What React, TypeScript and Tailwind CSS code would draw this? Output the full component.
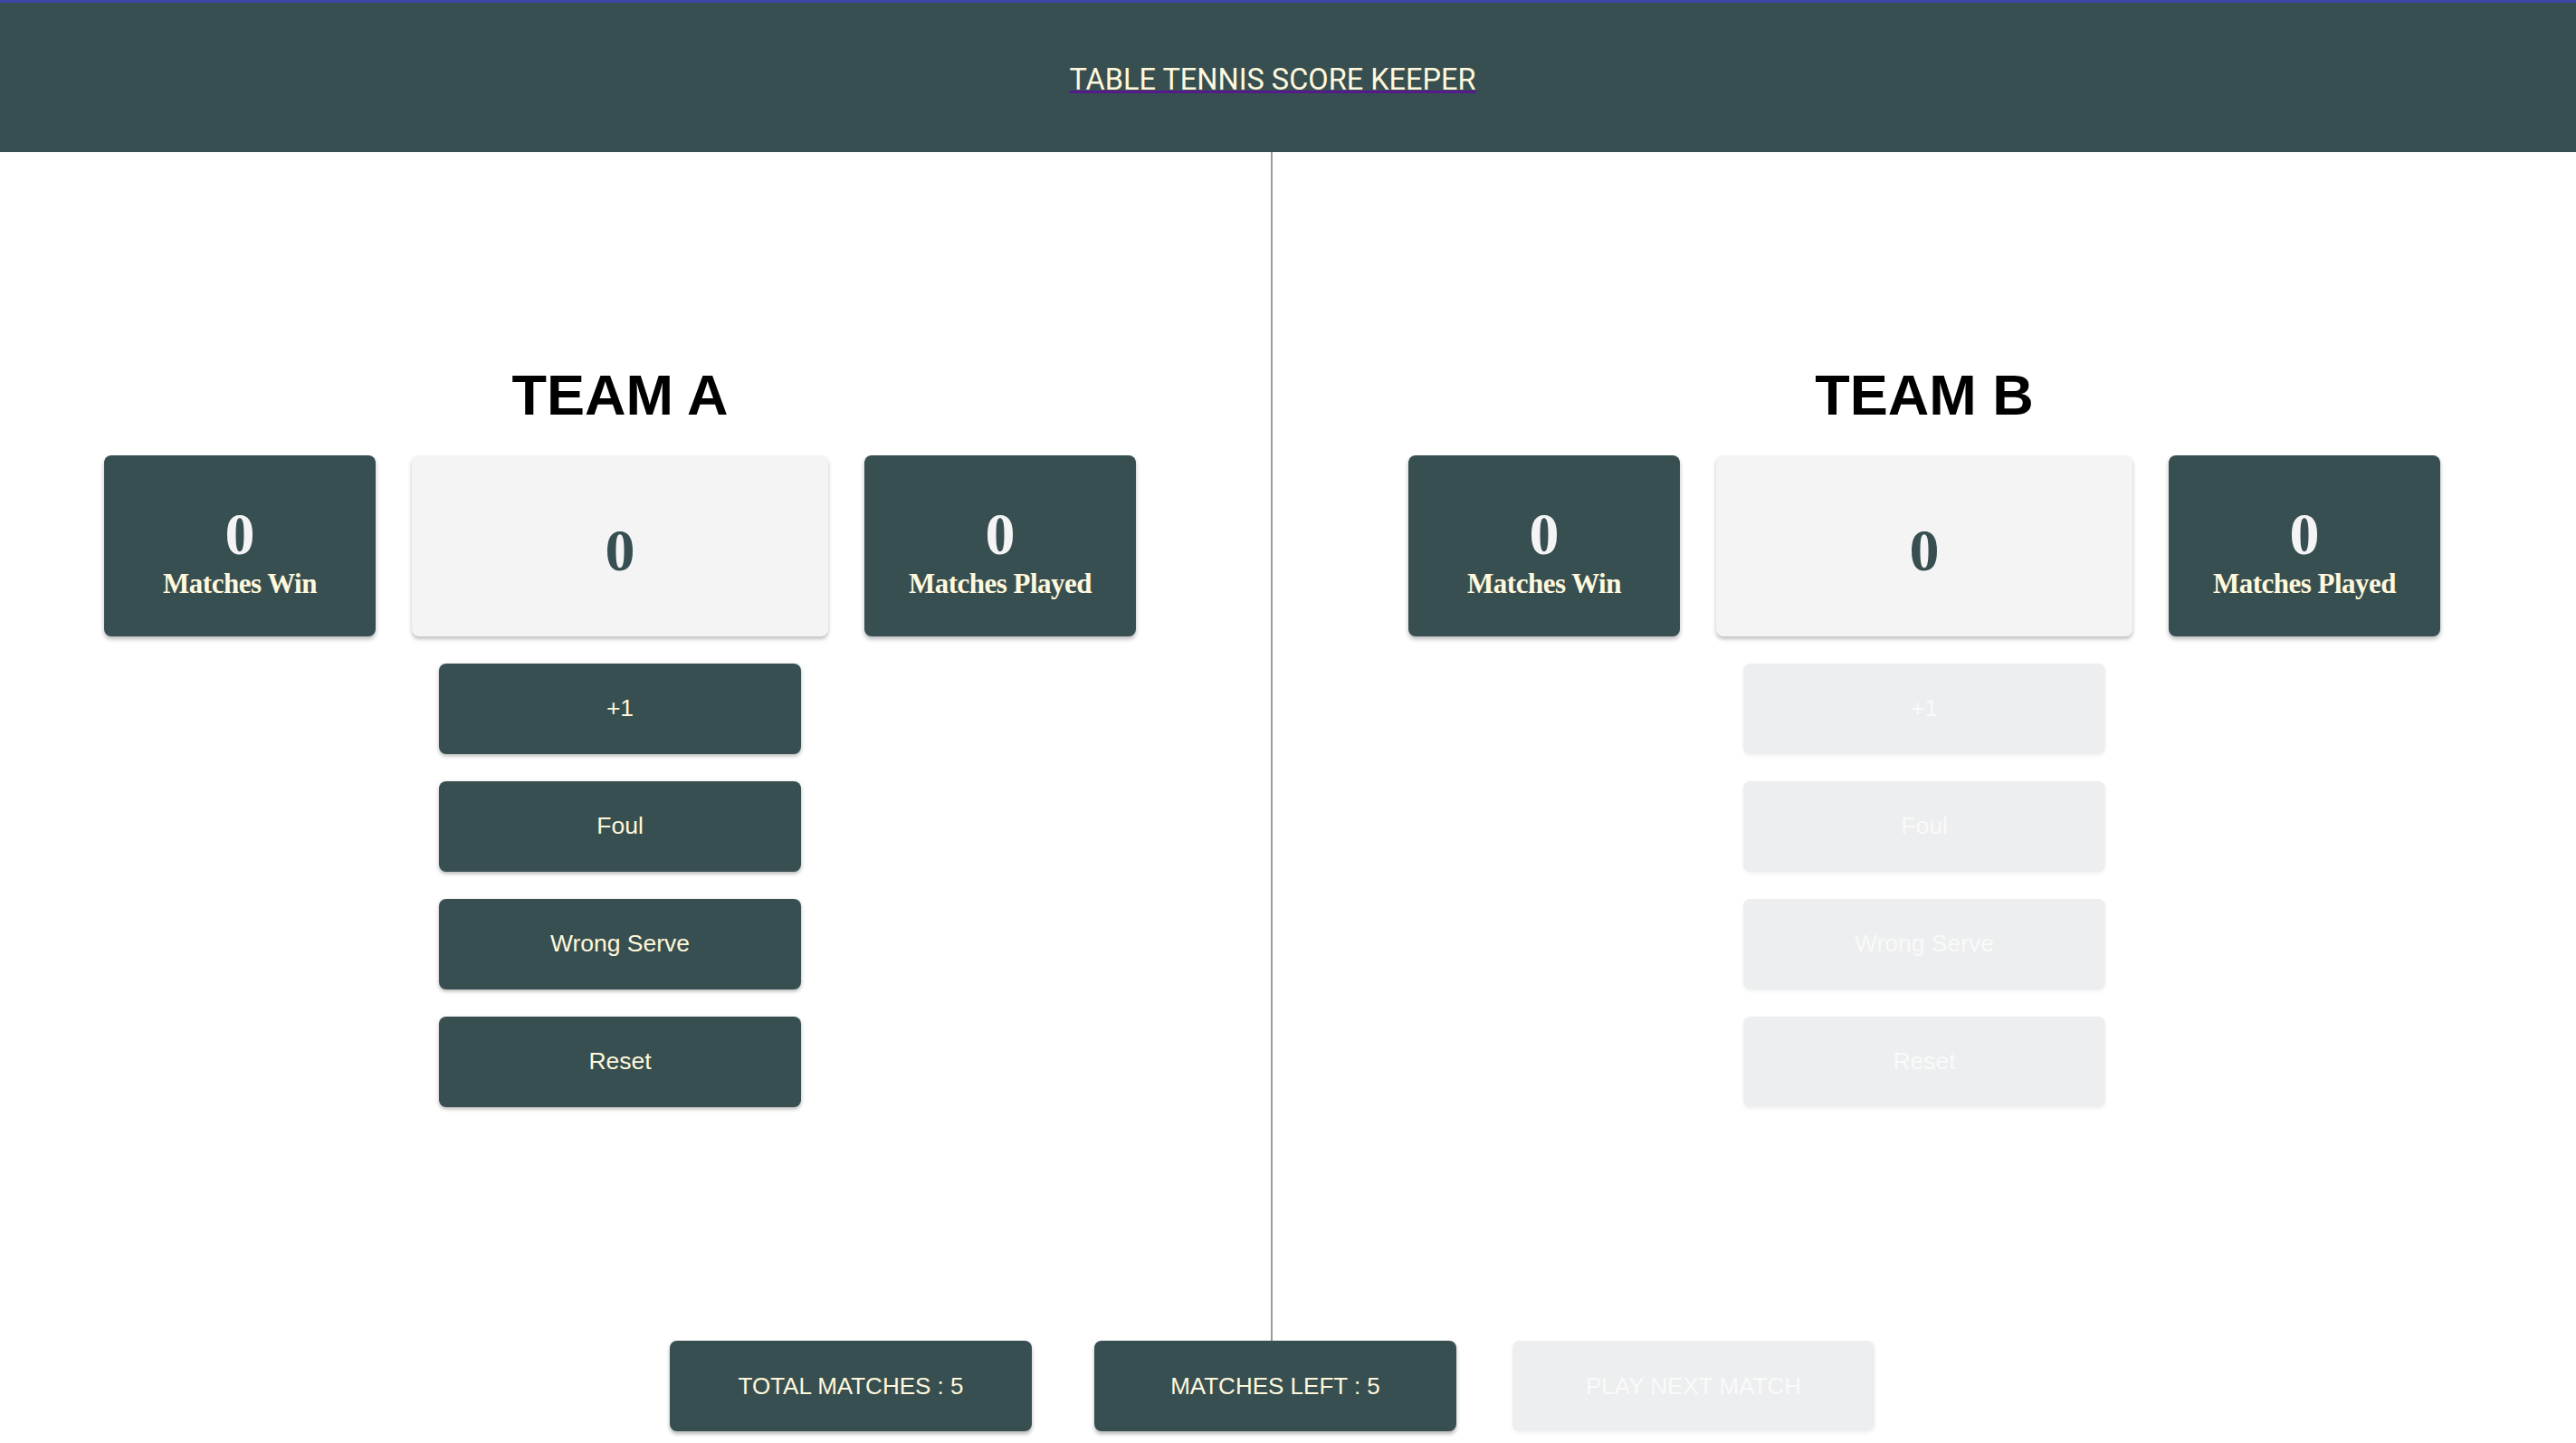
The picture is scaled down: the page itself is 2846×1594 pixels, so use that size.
import { useState } from "react"

const TEAL = "bg-[#384f51]"

function StatCard({ value, label }: { value: number; label: string }) {
    return (
        <div className={`${TEAL} w-[300px] h-[200px] rounded-[8px] shadow-[0_3px_5px_rgba(0,0,0,0.28)] flex flex-col items-center pt-[54px] font-['Liberation_Serif',serif] font-bold`}>
            <div className="text-[66px] leading-none text-[#f4f4f4]">{value}</div>
            <div className="mt-[6px] text-[31px] leading-none text-[#fff8dc] tracking-[-0.5px]">{label}</div>
        </div>
    )
}

function ActionButton({ label, disabled, onClick }: { label: string; disabled?: boolean; onClick?: () => void }) {
    return (
        <button
            disabled={disabled}
            onClick={onClick}
            className={
                disabled
                    ? "w-[400px] h-[100px] rounded-[8px] bg-[#eceeef] text-[#fafafa] shadow-[0_2px_4px_rgba(0,0,0,0.06)] text-[26.5px] font-['Liberation_Sans',Arial,sans-serif] flex items-center justify-center"
                    : "w-[400px] h-[100px] rounded-[8px] bg-[#384f51] text-[#fff8dc] shadow-[0_2px_4px_rgba(0,0,0,0.3)] text-[26.5px] font-['Liberation_Sans',Arial,sans-serif] flex items-center justify-center"
            }
        >
            {label}
        </button>
    )
}

function TeamPanel({
    name,
    score,
    wins,
    played,
    active,
    onPoint,
    onFoul,
    onWrongServe,
    onReset,
}: {
    name: string
    score: number
    wins: number
    played: number
    active: boolean
    onPoint: () => void
    onFoul: () => void
    onWrongServe: () => void
    onReset: () => void
}) {
    return (
        <div className="flex flex-col items-center">
            <h2 className="h-[64px] text-[63px] leading-none font-bold text-black font-['Liberation_Sans',Arial,sans-serif]">{name}</h2>
            <div className="mt-[34px] flex gap-[40px]">
                <StatCard value={wins} label="Matches Win" />
                <div className="w-[460px] h-[200px] rounded-[8px] bg-[#f4f4f4] shadow-[0_3px_4px_rgba(0,0,0,0.25)] flex justify-center pt-[72px]">
                    <div className="text-[66px] leading-none font-bold text-[#384f51] font-['Liberation_Serif',serif]">{score}</div>
                </div>
                <StatCard value={played} label="Matches Played" />
            </div>
            <div className="mt-[30px] flex flex-col gap-[30px]">
                <ActionButton label="+1" disabled={!active} onClick={onPoint} />
                <ActionButton label="Foul" disabled={!active} onClick={onFoul} />
                <ActionButton label="Wrong Serve" disabled={!active} onClick={onWrongServe} />
                <ActionButton label="Reset" disabled={!active} onClick={onReset} />
            </div>
        </div>
    )
}

export default function App() {
    const [scoreA, setScoreA] = useState(0)
    const [scoreB, setScoreB] = useState(0)
    const [serving, setServing] = useState<"A" | "B">("A")
    const totalMatches = 5
    const matchesLeft = 5

    return (
        <div className="w-[2846px] h-[1594px] bg-white flex flex-col">
            <header className={`${TEAL} h-[168px] border-t-[3px] border-[#3d47a8] flex justify-center pr-[34px] pt-[69px]`}>
                <a
                    href="#"
                    className="h-[32px] text-[32.5px] leading-none text-[#fff8dc] font-['Roboto',sans-serif] underline decoration-[#551a8b] decoration-3 underline-offset-1"
                >
                    TABLE TENNIS SCORE KEEPER
                </a>
            </header>

            <main className="flex h-[1313px]">
                <section className="w-[1406px] border-r-2 border-[#9b9b9b] pr-[34px] pt-[237px]">
                    <TeamPanel
                        name="TEAM A"
                        score={scoreA}
                        wins={0}
                        played={0}
                        active={serving === "A"}
                        onPoint={() => setScoreA(scoreA + 1)}
                        onFoul={() => setScoreB(scoreB + 1)}
                        onWrongServe={() => setServing("B")}
                        onReset={() => setScoreA(0)}
                    />
                </section>
                <section className="flex-1 pt-[237px]">
                    <TeamPanel
                        name="TEAM B"
                        score={scoreB}
                        wins={0}
                        played={0}
                        active={serving === "B"}
                        onPoint={() => setScoreB(scoreB + 1)}
                        onFoul={() => setScoreA(scoreA + 1)}
                        onWrongServe={() => setServing("A")}
                        onReset={() => setScoreB(0)}
                    />
                </section>
            </main>

            <footer className="flex justify-center pr-[35px]">
                <div className="w-[400px] h-[100px] rounded-[8px] bg-[#384f51] text-[#fff8dc] shadow-[0_3px_4px_rgba(0,0,0,0.3)] text-[26px] font-['Liberation_Sans',Arial,sans-serif] flex items-center justify-center">
                    TOTAL MATCHES : {totalMatches}
                </div>
                <div className="ml-[69px] w-[400px] h-[100px] rounded-[8px] bg-[#384f51] text-[#fff8dc] shadow-[0_3px_4px_rgba(0,0,0,0.3)] text-[26px] font-['Liberation_Sans',Arial,sans-serif] flex items-center justify-center">
                    MATCHES LEFT : {matchesLeft}
                </div>
                <button
                    disabled
                    className="ml-[62px] w-[400px] h-[100px] rounded-[8px] bg-[#eceeef] text-[#fafafa] shadow-[0_2px_4px_rgba(0,0,0,0.06)] text-[26px] font-['Liberation_Sans',Arial,sans-serif] flex items-center justify-center"
                >
                    PLAY NEXT MATCH
                </button>
            </footer>
        </div>
    )
}
